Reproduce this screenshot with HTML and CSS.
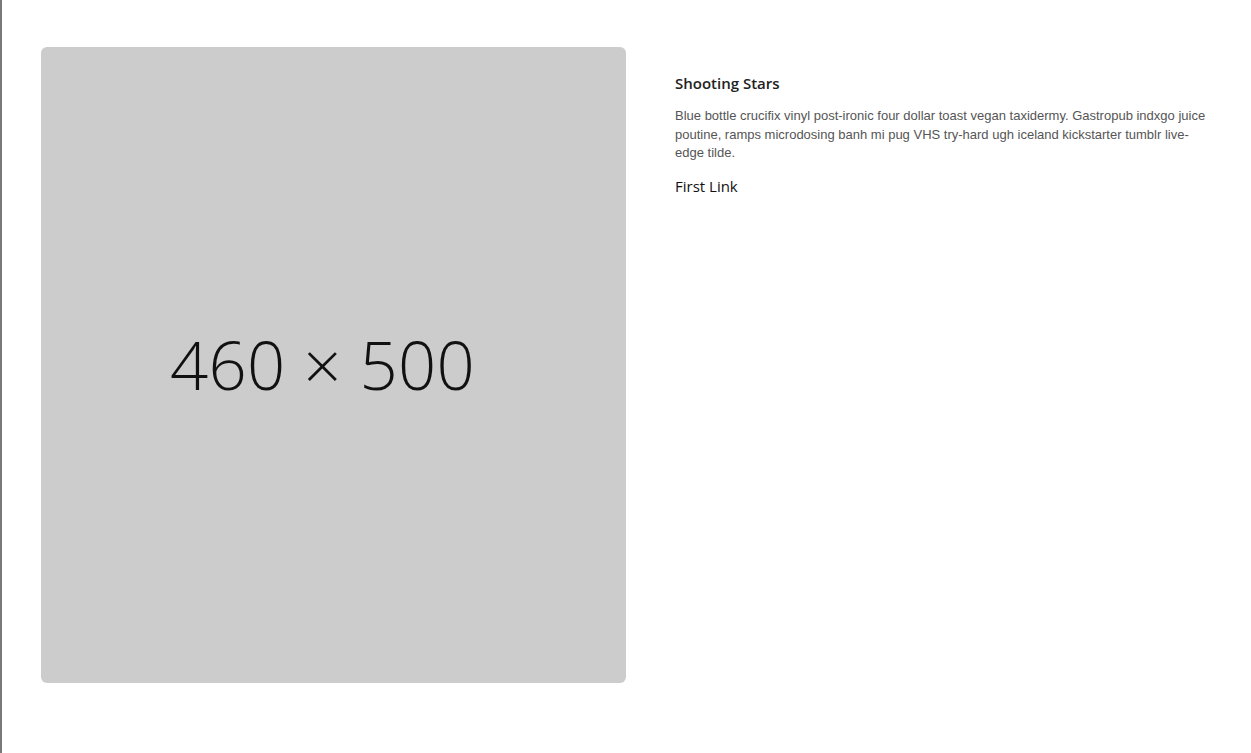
FILE: index.html
```html
<!DOCTYPE html>
<html>
<head>
<meta charset="utf-8">
<link rel="stylesheet" href="styles.css">
</head>
<body>
<div class="page">
  <section class="product">
    <div class="placeholder"><span class="ph-text">460 × 500</span></div>
    <div class="info">
      <h2 class="title">Shooting Stars</h2>
      <p class="desc">Blue bottle crucifix vinyl post-ironic four dollar toast vegan taxidermy. Gastropub indxgo juice poutine, ramps microdosing banh mi pug VHS try-hard ugh iceland kickstarter tumblr live-edge tilde.</p>
      <a class="link" href="#">First Link</a>
    </div>
  </section>
</div>
</body>
</html>
```

FILE: styles.css
```css
html, body {
  margin: 0;
  padding: 0;
  background: #fff;
}
.page {
  min-height: 753px;
  box-sizing: border-box;
  border-left: 2px solid #7a7a7a;
  padding: 47px 0 0 39px;
}
.product {
  display: flex;
  align-items: flex-start;
  gap: 49px;
}
.placeholder {
  width: 585px;
  height: 636px;
  flex: none;
  background: #cccccc;
  border-radius: 6px;
  display: flex;
  align-items: center;
  justify-content: center;
}
.ph-text {
  font-family: "Open Sans", sans-serif;
  font-weight: 300;
  font-size: 67px;
  letter-spacing: 0.3px;
  color: #111;
  margin-right: 22px;
  margin-bottom: 2px;
}
.info {
  width: 535px;
  padding-top: 26px;
}
.title {
  font-family: "Open Sans", sans-serif;
  font-weight: 600;
  font-size: 15px;
  color: #222;
  margin: 0 0 14px;
  line-height: 20px;
}
.desc {
  font-family: "Liberation Sans", Arial, sans-serif;
  font-size: 13px;
  line-height: 18.5px;
  color: #555;
  margin: 0 0 13px;
}
.link {
  display: block;
  font-family: "Open Sans", sans-serif;
  font-size: 15px;
  color: #111;
  text-decoration: none;
  line-height: 20px;
}
```
